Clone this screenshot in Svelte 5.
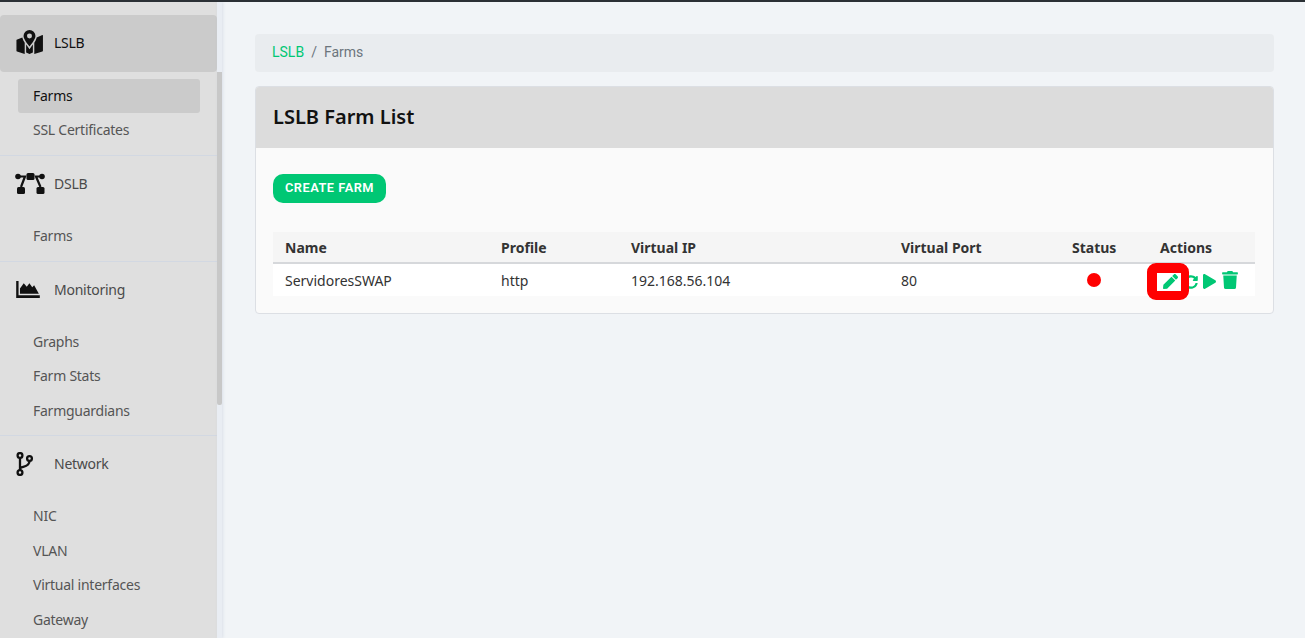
<script>
  const sections = [
    { name: 'LSLB', icon: 'map', open: true, items: ['Farms', 'SSL Certificates'] },
    { name: 'DSLB', icon: 'nodes', items: ['Farms'] },
    { name: 'Monitoring', icon: 'chart', items: ['Graphs', 'Farm Stats', 'Farmguardians'] },
    { name: 'Network', icon: 'branch', items: ['NIC', 'VLAN', 'Virtual interfaces', 'Gateway'] }
  ];
  const columns = ['Name', 'Profile', 'Virtual IP', 'Virtual Port', 'Status', 'Actions'];
</script>

<div class="topline"></div>
<div class="layout">
  <aside class="sidebar">
    {#each sections as section}
      <section class="group">
        <div class="head" class:open={section.open}>
          <span class="icon">
            {#if section.icon === 'map'}
              <svg class="nudge" width="27" height="24" viewBox="0 0 28 25">
                <path fill="#111" fill-rule="evenodd" d="M14 0a6.200 6.200 0 0 0-6.200 6.200c0 3 3.800 7.800 6.200 11 2.400-3.200 6.200-8 6.200-11A6.200 6.200 0 0 0 14 0zm0 3.600a2.600 2.600 0 1 1 0 5.200 2.600 2.600 0 0 1 0-5.200z"/>
                <path fill="#111" d="M.6 10.200 6.500 7.700c.4 1.800 1.400 3.700 2.500 5.500V25L1 22.500c-.4-.1-.6-.5-.6-.9V10.900c0-.3.100-.6.200-.7zM10.500 15.200c1.100 1.600 2.300 3.100 3.500 4.800 1.200-1.700 2.400-3.200 3.500-4.800v8.300L14 25l-3.500-1.500zM19 13.200c1.100-1.800 2.100-3.700 2.500-5.500l5.900-2.500c.3-.1.600.1.600.5V21.600c0 .4-.2.800-.6.900L19 25z"/>
              </svg>
            {:else if section.icon === 'nodes'}
              <svg width="30" height="21" viewBox="0 0 30 21">
                <g fill="#111">
                  <rect x="11.500" y="0" width="8" height="7" rx="1.500"/>
                  <rect x="2" y="14" width="8" height="7" rx="1.500"/>
                  <rect x="21.500" y="14" width="8" height="7" rx="1.500"/>
                  <circle cx="3" cy="3.500" r="2.800"/>
                  <circle cx="27" cy="3.500" r="2.800"/>
                </g>
                <path stroke="#111" stroke-width="2.200" fill="none" d="M3 3.500h7L6 14M27 3.500h-6l4.500 10.500"/>
              </svg>
            {:else if section.icon === 'chart'}
              <svg class="nudge" width="24" height="17" viewBox="0 0 25 18">
                <path fill="#111" d="M0 0h2.500v15H25v3H0z"/>
                <path fill="#111" d="M4 13.500V8l4-5.500 3.200 3.500L14 2.500l3 4 2-2 5 9z"/>
              </svg>
            {:else}
              <svg width="19" height="24" viewBox="0 0 19 24">
                <g fill="none" stroke="#111" stroke-width="2.300">
                  <circle cx="5" cy="3.500" r="2.400"/>
                  <circle cx="5" cy="20.500" r="2.400"/>
                  <circle cx="14.500" cy="6.500" r="2.400"/>
                  <path d="M5 6v12M5 17c0-3 9.500-1 9.500-8"/>
                </g>
              </svg>
            {/if}
          </span>
          <span class="label">{section.name}</span>
        </div>
        <ul>
          {#each section.items as item, i}
            <li class:active={section.open && i === 0}>{item}</li>
          {/each}
        </ul>
      </section>
    {/each}
  </aside>
  <div class="rail"><div class="thumb"></div></div>

  <main>
    <nav class="breadcrumb">
      <a href="#lslb">LSLB</a>
      <span class="sep">/</span>
      <span class="current">Farms</span>
    </nav>

    <div class="card">
      <header><h2>LSLB Farm List</h2></header>
      <div class="body">
        <button>CREATE FARM</button>
        <table>
          <thead>
            <tr>
              {#each columns as col}
                <th>{col}</th>
              {/each}
            </tr>
          </thead>
          <tbody>
            <tr>
              <td>ServidoresSWAP</td>
              <td>http</td>
              <td>192.168.56.104</td>
              <td>80</td>
              <td><span class="dot"></span></td>
              <td class="actions-cell">
                <div class="actions">
                  <svg width="15" height="15" viewBox="0 0 512 512">
                    <path fill="#00c774" d="M290.740 93.240l128.020 128.020-277.990 277.990-114.140 12.600C11.350 513.540-1.560 500.620.14 485.340l12.700-114.220 277.900-277.880zm207.200-19.060l-60.110-60.110c-18.750-18.750-49.160-18.750-67.910 0l-56.550 56.550 128.020 128.020 56.550-56.550c18.750-18.760 18.750-49.160 0-67.910z"/>
                  </svg>
                  <svg width="14" height="14" viewBox="0 0 512 512">
                    <path fill="#00c774" d="M370.720 133.280C339.458 104.008 298.888 87.962 255.848 88c-77.458.068-144.328 53.178-162.791 126.850-1.344 5.363-6.122 9.150-11.651 9.150H24.103c-7.498 0-13.194-6.807-11.807-14.176C33.933 94.924 134.813 8 256 8c66.448 0 126.791 26.136 171.315 68.685L463.030 40.970C478.149 25.851 504 36.559 504 57.941V192c0 13.255-10.745 24-24 24H345.941c-21.382 0-32.090-25.851-16.971-40.971l41.750-41.749zM32 296h134.059c21.382 0 32.090 25.851 16.971 40.971l-41.750 41.750c31.262 29.273 71.835 45.319 114.876 45.280 77.418-.07 144.315-53.144 162.787-126.849 1.344-5.363 6.122-9.150 11.651-9.150h57.304c7.498 0 13.194 6.807 11.807 14.176C478.067 417.076 377.187 504 256 504c-66.448 0-126.791-26.136-171.315-68.685L48.970 471.030C33.851 486.149 8 475.441 8 454.059V320c0-13.255 10.745-24 24-24z"/>
                  </svg>
                  <svg width="13" height="15" viewBox="0 0 448 512">
                    <path fill="#00c774" d="M424.400 214.700L72.400 6.600C43.800-10.300 0 6.100 0 47.900V464c0 37.500 40.700 60.100 72.400 41.300l352-208c31.400-18.500 31.500-64.100 0-82.600z"/>
                  </svg>
                  <svg width="16" height="18" viewBox="0 0 448 512">
                    <path fill="#00c774" d="M432 32H312l-9.400-18.700A24 24 0 0 0 281.100 0H166.800a23.720 23.720 0 0 0-21.400 13.300L136 32H16A16 16 0 0 0 0 48v32a16 16 0 0 0 16 16h416a16 16 0 0 0 16-16V48a16 16 0 0 0-16-16zM53.200 467a48 48 0 0 0 47.900 45h245.800a48 48 0 0 0 47.900-45L416 128H32z"/>
                  </svg>
                  <span class="marker"></span>
                </div>
              </td>
            </tr>
          </tbody>
        </table>
      </div>
    </div>
  </main>
</div>

<style>
  :global(body) {
    margin: 0;
    background: #f1f4f7;
  }
  .topline {
    height: 2px;
    background: #2b3035;
  }
  .layout {
    display: flex;
    height: 636px;
    overflow: hidden;
  }
  .sidebar {
    flex: none;
    box-sizing: border-box;
    width: 217px;
    height: 636px;
    padding-top: 13px;
    overflow: hidden;
    background: #dfdfdf;
    font-family: "Noto Sans", sans-serif;
    letter-spacing: -0.25px;
  }
  .rail {
    flex: none;
    width: 5px;
    background: #e9edf3;
    box-shadow: 1px 0 3px rgba(180, 190, 205, 0.35);
  }
  .thumb {
    margin-top: 70px;
    height: 333px;
    background: #c8c8c8;
    border-radius: 0 0 2px 2px;
  }
  .group {
    border-bottom: 1px solid #d2d8e2;
  }
  .group:last-child {
    border-bottom: 0;
  }
  .head {
    display: flex;
    align-items: center;
    box-sizing: border-box;
    height: 56px;
    padding: 0 0 1px 15px;
    color: #4a4a4a;
    font-size: 14px;
  }
  .head.open {
    height: 57px;
    padding-bottom: 3px;
    background: #cbcbcb;
    border-radius: 4px;
    color: #111;
  }
  .icon {
    display: flex;
    align-items: center;
    width: 39px;
  }
  .nudge {
    margin-left: 1px;
  }
  ul {
    list-style: none;
    margin: 0;
    padding: 7px 17px 7px 18px;
  }
  .head.open + ul {
    padding-top: 6.750px;
    padding-bottom: 7.500px;
  }
  li {
    height: 34.500px;
    line-height: 34.500px;
    padding-left: 15px;
    font-size: 14px;
    color: #555;
    border-radius: 3px;
  }
  li.active {
    background: #cbcbcb;
    color: #111;
  }
  main {
    flex: 1;
    padding: 32px 31px 0 33px;
    min-width: 0;
  }
  .breadcrumb {
    display: flex;
    align-items: center;
    gap: 7px;
    box-sizing: border-box;
    height: 38px;
    padding: 0 0 2px 17px;
    background: #e9ecef;
    border-radius: 4px;
    font-family: Roboto, sans-serif;
    font-size: 14px;
    color: #6c757d;
  }
  .breadcrumb a {
    color: #00c774;
    text-decoration: none;
  }
  .card {
    margin-top: 14px;
    background: #fafafa;
    border: 1px solid #dcdfe4;
    border-radius: 4px;
    overflow: hidden;
  }
  header {
    display: flex;
    align-items: center;
    box-sizing: border-box;
    height: 61px;
    padding: 0 0 2px 17px;
    background: #dcdcdc;
  }
  h2 {
    margin: 0;
    font-family: "Noto Sans", sans-serif;
    font-size: 20px;
    font-weight: 600;
    color: #111;
  }
  .body {
    padding: 26px 18px 17px 17px;
  }
  button {
    display: block;
    width: 113px;
    height: 29px;
    padding: 0 0 2px;
    border: 0;
    border-radius: 10px;
    background: #00c774;
    color: #fff;
    font-family: Roboto, sans-serif;
    font-size: 12.800px;
    font-weight: 600;
    letter-spacing: 0.5px;
  }
  table {
    width: 982px;
    margin-top: 29px;
    border-collapse: collapse;
    table-layout: fixed;
    font-family: "Noto Sans", sans-serif;
    font-size: 14px;
    color: #333;
  }
  th {
    box-sizing: border-box;
    padding: 0 12px;
    text-align: left;
    font-weight: 700;
  }
  th:nth-child(1) { width: 216px; }
  th:nth-child(2) { width: 130px; }
  th:nth-child(3) { width: 270px; }
  th:nth-child(4) { width: 171px; }
  th:nth-child(5) { width: 88px; }
  thead tr {
    height: 31px;
    background: #f5f5f5;
    border-bottom: 2px solid #d6d8db;
  }
  tbody tr {
    height: 32px;
    background: #fff;
  }
  td {
    padding: 0 12px;
  }
  .dot {
    display: block;
    width: 14px;
    height: 14px;
    margin-left: 15px;
    border-radius: 50%;
    background: #f00;
  }
  td.actions-cell {
    padding: 0;
  }
  .actions {
    position: relative;
    display: flex;
    align-items: flex-end;
    box-sizing: border-box;
    height: 32px;
    padding: 0 0 7px 15px;
    gap: 5.500px;
  }
  .marker {
    position: absolute;
    left: -1px;
    top: -1px;
    box-sizing: border-box;
    width: 42px;
    height: 37px;
    border-style: solid;
    border-color: #f00;
    border-width: 10px 8px 9px 10px;
    border-radius: 9px;
  }
</style>
